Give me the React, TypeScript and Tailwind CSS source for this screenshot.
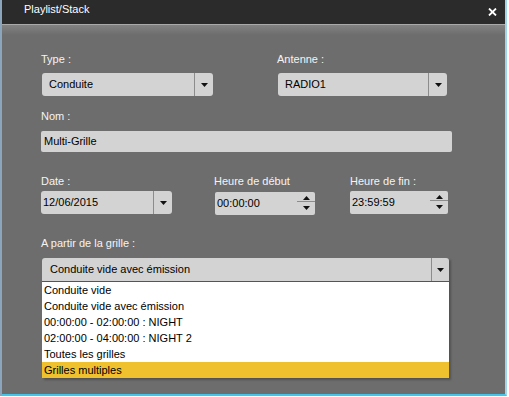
import React from "react";

const font = "font-['Liberation_Sans',Arial,sans-serif] text-[11px] leading-[14px]";

function Down() {
  return (
    <svg width="7" height="4" viewBox="0 0 7 4">
      <path d="M0 0H7L3.5 4Z" fill="#111" />
    </svg>
  );
}
function Up() {
  return (
    <svg width="7" height="4" viewBox="0 0 7 4">
      <path d="M0 4H7L3.5 0Z" fill="#111" />
    </svg>
  );
}

function Select({ text, cls, padCls }: { text: string; cls: string; padCls: string }) {
  return (
    <div className={`${cls} flex h-[23px] rounded-[3px] bg-[#d3d3d3] text-black`}>
      <div className={`flex-1 flex items-center pb-[2px] ${padCls}`}>{text}</div>
      <div className="w-[19px] flex items-center justify-center border-l border-[#8c8c8c]">
        <Down />
      </div>
    </div>
  );
}

function Spin({ text, cls }: { text: string; cls: string }) {
  return (
    <div className={`${cls} flex h-[23px] rounded-[2px] bg-[#d3d3d3] text-black`}>
      <div className="flex-1 flex items-center pb-[2px] pl-[2px]">{text}</div>
      <div className="w-[18px] flex flex-col">
        <div className="h-[9px] flex items-end justify-center pb-[1px]">
          <Up />
        </div>
        <div className="h-px bg-[#8c8c8c]" />
        <div className="flex-1 flex items-start justify-center pt-[4px]">
          <Down />
        </div>
      </div>
    </div>
  );
}

export default function App() {
  const items = [
    "Conduite vide",
    "Conduite vide avec émission",
    "00:00:00 - 02:00:00 : NIGHT",
    "02:00:00 - 04:00:00 : NIGHT 2",
    "Toutes les grilles",
    "Grilles multiples",
  ];
  return (
    <div className={`w-[509px] h-[397px] bg-white ${font}`}>
      <div className="w-[507px] h-[396px] flex flex-col border-l-2 border-r-2 border-b-2 border-l-[#8ba5bd] border-r-[#9fd6ec] border-b-[#3fc6ea]">
        <div className="h-[24px] bg-[#2b2b2b] flex justify-between items-start pl-[22px] pr-[8px] text-white">
          <div className="pt-[2px]">Playlist/Stack</div>
          <svg className="mt-[8px]" width="9" height="8" viewBox="0 0 9 8">
            <path d="M1 0.5L8 7.5M8 0.5L1 7.5" stroke="#fff" strokeWidth="1.8" />
          </svg>
        </div>
        <div className="h-px bg-[#a9a9a9]" />
        <div className="flex-1 bg-[linear-gradient(to_bottom,#828282_0px,#6d6d6d_10px)] pl-[39px] pt-[27px] text-[#f4f4f4]">
          <div className="flex">
            <div className="w-[236px] flex flex-col">
              <div>Type :</div>
              <Select text="Conduite" cls="mt-[7px] ml-px w-[171px]" padCls="pl-[7px]" />
            </div>
            <div className="flex flex-col">
              <div>Antenne :</div>
              <Select text="RADIO1" cls="mt-[7px] ml-px w-[169px]" padCls="pl-[7px]" />
            </div>
          </div>
          <div className="mt-[13px]">Nom :</div>
          <div className="mt-[8px] w-[411px] h-[21px] rounded-[2px] bg-[#d3d3d3] text-black flex items-center pb-[2px] pl-[3px]">
            Multi-Grille
          </div>
          <div className="mt-[22px] flex items-start">
            <div className="w-[173px] flex flex-col">
              <div>Date :</div>
              <Select text="12/06/2015" cls="mt-[3px] w-[131px]" padCls="pl-[2px]" />
            </div>
            <div className="w-[136px] flex flex-col">
              <div>Heure de début</div>
              <Spin text="00:00:00" cls="mt-[4px] -mb-px ml-px w-[100px]" />
            </div>
            <div className="flex flex-col">
              <div>Heure de fin :</div>
              <Spin text="23:59:59" cls="mt-[3px] w-[98px]" />
            </div>
          </div>
          <div className="mt-[22px]">A partir de la grille :</div>
          <div className="mt-[8px] ml-px w-[407px] flex flex-col shadow-[2px_2px_2px_rgba(0,0,0,0.25)]">
            <div className="flex h-[23px] rounded-t-[3px] bg-[#d3d3d3] text-black">
              <div className="flex-1 flex items-center pb-[2px] pl-[8px]">Conduite vide avec émission</div>
              <div className="w-[18px] flex items-center justify-center border-l border-[#8c8c8c]">
                <Down />
              </div>
            </div>
            <div className="border-t border-[#555555] bg-white text-black">
              {items.map((it, i) => (
                <div
                  key={it}
                  className={`h-[16px] flex items-center pl-[2px] ${i === 5 ? "bg-[#efc12f]" : ""}`}
                >
                  {it}
                </div>
              ))}
            </div>
          </div>
        </div>
      </div>
    </div>
  );
}
